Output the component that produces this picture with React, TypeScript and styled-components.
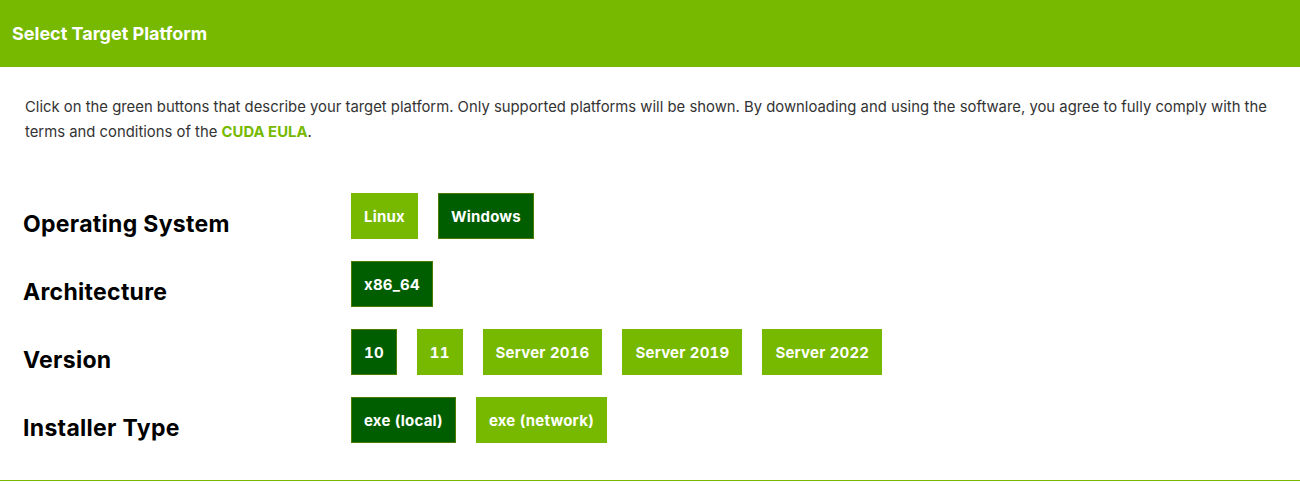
import React from 'react';
import styled, { createGlobalStyle } from 'styled-components';

const GlobalStyle = createGlobalStyle`
  html, body {
    margin: 0;
    padding: 0;
    background: #ffffff;
    font-family: Inter, "Noto Sans", "Liberation Sans", sans-serif;
  }
`;

const Panel = styled.section`
  width: 1300px;
  height: 481px;
  border-bottom: 1px solid #76b900;
  box-sizing: border-box;
`;

const Header = styled.header`
  height: 67px;
  display: flex;
  align-items: center;
  padding: 0 12px;
  background-color: #76b900;
  color: #ffffff;
  font-size: 18px;
  font-weight: 700;
  box-sizing: border-box;
`;

const Body = styled.div`
  padding: 28px 25px 0 23px;
`;

const Intro = styled.p`
  margin: 0 0 0 2px;
  font-size: 14.85px;
  line-height: 25px;
  color: #333333;
`;

const EulaLink = styled.a`
  color: #76b900;
  font-weight: 700;
  text-decoration: none;
`;

const Rows = styled.div`
  display: flex;
  flex-direction: column;
  gap: 22px;
  margin-top: 48px;
`;

const Row = styled.div`
  display: flex;
  align-items: flex-start;
`;

const Label = styled.div`
  width: 328px;
  padding-top: 18px;
  font-size: 23px;
  line-height: 26px;
  font-weight: 700;
  letter-spacing: 0.3px;
  color: #000000;
`;

const Options = styled.div`
  display: flex;
  gap: 20px;
`;

const Option = styled.button<{ $selected?: boolean }>`
  height: 46px;
  padding: 0 12px;
  border: 1px solid ${(p) => (p.$selected ? '#4c7d00' : '#76b900')};
  background-color: ${(p) => (p.$selected ? '#005e00' : '#76b900')};
  color: #ffffff;
  font-family: inherit;
  font-size: 15px;
  font-weight: 700;
  font-variant-numeric: tabular-nums;
  letter-spacing: 0.2px;
  cursor: pointer;
`;

const platform = [
  { label: 'Operating System', options: ['Linux', 'Windows'], selected: 'Windows' },
  { label: 'Architecture', options: ['x86_64'], selected: 'x86_64' },
  {
    label: 'Version',
    options: ['10', '11', 'Server 2016', 'Server 2019', 'Server 2022'],
    selected: '10',
  },
  { label: 'Installer Type', options: ['exe (local)', 'exe (network)'], selected: 'exe (local)' },
];

const App: React.FC = () => {
  return (
    <>
      <GlobalStyle />
      <Panel>
        <Header>Select Target Platform</Header>
        <Body>
          <Intro>
            Click on the green buttons that describe your target platform. Only supported platforms
            will be shown. By downloading and using the software, you agree to fully comply with the
            terms and conditions of the <EulaLink href="#">CUDA EULA</EulaLink>.
          </Intro>
          <Rows>
            {platform.map((row) => (
              <Row key={row.label}>
                <Label>{row.label}</Label>
                <Options>
                  {row.options.map((opt) => (
                    <Option key={opt} $selected={opt === row.selected}>
                      {opt}
                    </Option>
                  ))}
                </Options>
              </Row>
            ))}
          </Rows>
        </Body>
      </Panel>
    </>
  );
};

export default App;
